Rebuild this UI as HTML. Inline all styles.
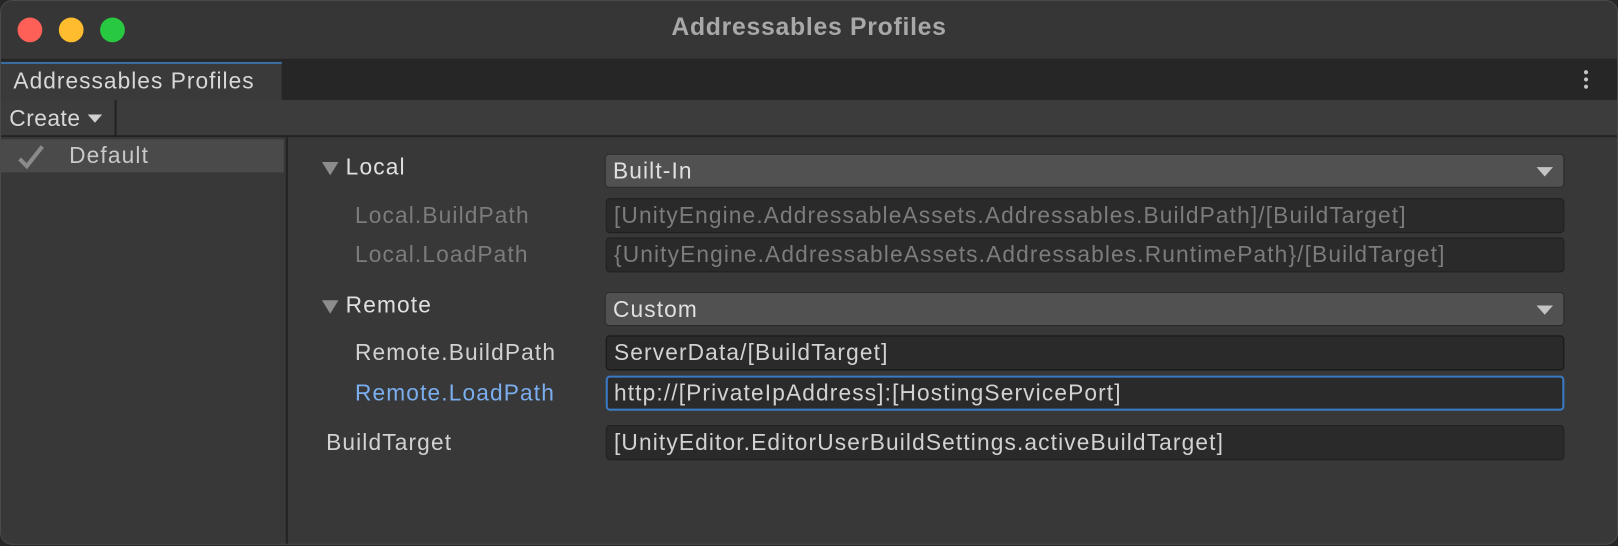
<!DOCTYPE html>
<html><head><meta charset="utf-8"><style>
*{margin:0;padding:0;box-sizing:border-box}
body{width:1618px;height:546px;background:#262626;font-family:"Liberation Sans",sans-serif;font-size:22px;letter-spacing:1.1px;color:#d2d2d2;overflow:hidden;position:relative}
.wrap{position:absolute;left:0;top:0;width:1568px;height:529px;transform:scale(1.0319);transform-origin:0 0}
.win{position:absolute;left:0;top:0;width:1568px;height:528px;background:#383838;border-radius:12px;overflow:hidden;border:1px solid #4a4a4a}
.title{position:absolute;left:0;top:0;width:100%;height:56px;background:#363636;text-align:center;line-height:52px;font-weight:bold;font-size:24px;letter-spacing:0.7px;color:#a8a8a8}
.dot{position:absolute;top:16px;width:24px;height:24px;border-radius:50%}
.tabs{position:absolute;left:0;top:56px;width:100%;height:40px;background:#262626}
.tab{position:absolute;left:0;top:3px;width:272px;height:37px;background:#3a3a3a;border-top:2px solid #3a6ea5;padding-left:12px;line-height:34px;color:#d8d8d8;letter-spacing:1.0px}
.menu{position:absolute;right:28px;top:11px;width:4px}
.menu i{display:block;width:4px;height:4px;border-radius:50%;background:#c4c4c4;margin-bottom:3px}
.tool{position:absolute;left:0;top:96px;width:100%;height:36px;background:#3c3c3c;border-bottom:2px solid #232323}
.create{position:absolute;left:0;top:0;width:112px;height:36px;border-right:2px solid #222;padding-left:8px;line-height:36px;color:#d8d8d8;letter-spacing:0.5px}
.left{position:absolute;left:0;top:132px;width:278px;height:414px;background:#383838;border-right:2px solid #232323}
.sel{position:absolute;left:0;top:2px;width:274px;height:32px;background:#4a4a4a;line-height:32px;padding-left:66px;color:#c8c8c8}
.lbl{position:absolute;line-height:34px}
.tri{position:absolute;width:0;height:0;border-left:8px solid transparent;border-right:8px solid transparent;border-top:13px solid #8c8c8c}
.dd{position:absolute;left:585px;width:930px;height:33px;background:#515151;border:1px solid #2a2a2a;border-radius:4px;padding-left:7px;line-height:31px;color:#e0e0e0}
.dd:after{content:"";position:absolute;right:10px;top:12px;border-left:8px solid transparent;border-right:8px solid transparent;border-top:9px solid #c4c4c4}
.fld{position:absolute;left:586px;width:929px;height:34px;background:#2a2a2a;border:1px solid #202020;border-radius:4px;padding-left:7px;line-height:32px;color:#d2d2d2;white-space:nowrap;overflow:hidden}
.dim{color:#7c7c7c}
</style></head><body>
<div class="wrap"><div class="win">
<div class="title">Addressables Profiles</div>
<div class="dot" style="left:16px;background:#fe5f57"></div>
<div class="dot" style="left:56px;background:#febc2e"></div>
<div class="dot" style="left:96px;background:#28c840"></div>
<div class="tabs"><div class="tab">Addressables Profiles</div><div class="menu"><i></i><i></i><i></i></div></div>
<div class="tool"><div class="create">Create <span style="display:inline-block;border-left:7px solid transparent;border-right:7px solid transparent;border-top:8px solid #d0d0d0;vertical-align:3px"></span></div></div>
<div class="left"><div class="sel">Default</div>
<svg style="position:absolute;left:16px;top:6px" width="28" height="28" viewBox="0 0 28 28"><path d="M2 15 L9 22 L24 3" fill="none" stroke="#8a8a8a" stroke-width="4"/></svg></div>
<div class="tri" style="left:311px;top:156px"></div><div class="lbl" style="left:334px;top:144px;color:#e0e0e0">Local</div>
<div class="dd" style="top:148px">Built-In</div>
<div class="lbl dim" style="left:343px;top:191px">Local.BuildPath</div>
<div class="fld dim" style="top:191px">[UnityEngine.AddressableAssets.Addressables.BuildPath]/[BuildTarget]</div>
<div class="lbl dim" style="left:343px;top:229px">Local.LoadPath</div>
<div class="fld dim" style="top:229px">{UnityEngine.AddressableAssets.Addressables.RuntimePath}/[BuildTarget]</div>
<div class="tri" style="left:311px;top:290px"></div><div class="lbl" style="left:334px;top:278px;color:#e0e0e0">Remote</div>
<div class="dd" style="top:282px">Custom</div>
<div class="lbl" style="left:343px;top:324px">Remote.BuildPath</div>
<div class="fld" style="top:324px;border-color:#161616">ServerData/[BuildTarget]</div>
<div class="lbl" style="left:343px;top:363px;color:#7baeef">Remote.LoadPath</div>
<div class="fld" style="top:363px;border:2px solid #3a79c4;line-height:30px;padding-left:6px">http://[PrivateIpAddress]:[HostingServicePort]</div>
<div class="lbl" style="left:315px;top:411px">BuildTarget</div>
<div class="fld" style="top:411px">[UnityEditor.EditorUserBuildSettings.activeBuildTarget]</div>
</div></div>
</body></html>
